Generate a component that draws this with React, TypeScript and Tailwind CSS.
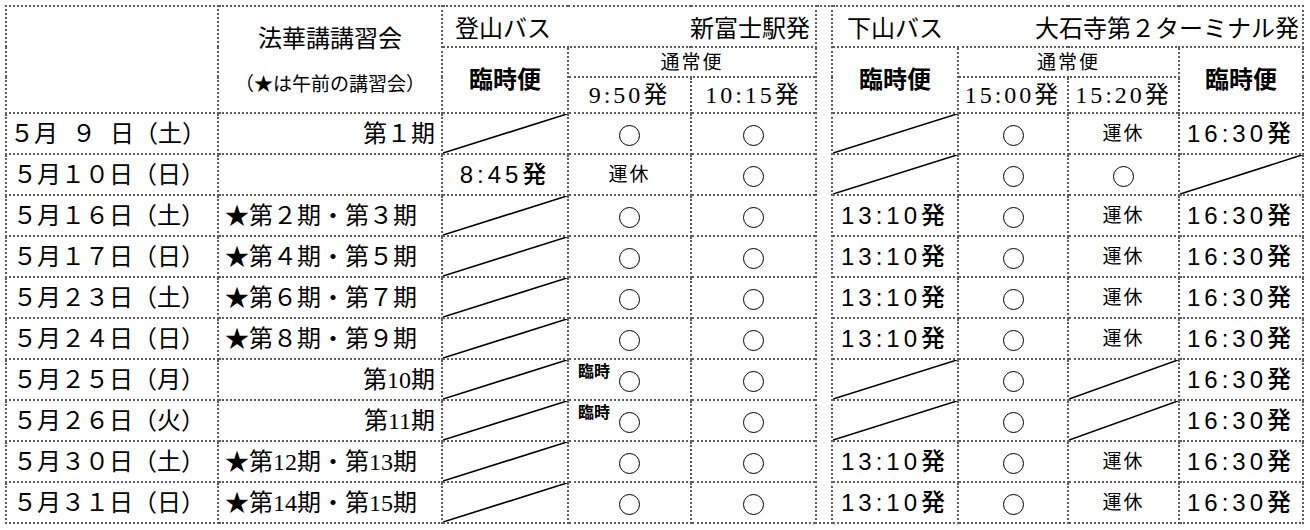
import type { ReactNode } from "react";

const B = "border-2 border-dotted border-[#5e5e5e]";
const MIN = "font-['Liberation_Serif','Noto_Sans_CJK_JP',serif]";
const GOTH = "font-['Liberation_Sans','Noto_Sans_CJK_JP',sans-serif]";

type Cell = "d" | "o" | "k" | "r" | "" | string;

interface Row {
  date: ReactNode;
  lecture: string;
  right?: boolean;
  cells: Cell[];
}

const normal = (t: string): Cell[] => ["d", "o", "o", t, "o", "k", "16:30発"];

const rows: Row[] = [
  {
    date: (
      <span className="-ml-[3px] flex whitespace-nowrap">
        <span className="shrink-0">５月</span>
        <span className="ml-[14px] shrink-0">９</span>
        <span className="ml-[14px] shrink-0">日（土）</span>
      </span>
    ),
    lecture: "第１期",
    right: true,
    cells: ["d", "o", "o", "d", "o", "k", "16:30発"],
  },
  { date: "５月１０日（日）", lecture: "", cells: ["8:45発", "k", "o", "d", "o", "o", "d"] },
  { date: "５月１６日（土）", lecture: "★第２期・第３期", cells: normal("13:10発") },
  { date: "５月１７日（日）", lecture: "★第４期・第５期", cells: normal("13:10発") },
  { date: "５月２３日（土）", lecture: "★第６期・第７期", cells: normal("13:10発") },
  { date: "５月２４日（日）", lecture: "★第８期・第９期", cells: normal("13:10発") },
  { date: "５月２５日（月）", lecture: "第10期", right: true, cells: ["d", "r", "o", "d", "o", "d", "16:30発"] },
  { date: "５月２６日（火）", lecture: "第11期", right: true, cells: ["d", "r", "o", "d", "o", "d", "16:30発"] },
  { date: "５月３０日（土）", lecture: "★第12期・第13期", cells: normal("13:10発") },
  { date: "５月３１日（日）", lecture: "★第14期・第15期", cells: normal("13:10発") },
];

function Diag() {
  return (
    <svg className="absolute inset-0 h-full w-full" viewBox="0 0 100 100" preserveAspectRatio="none">
      <line x1="0" y1="100" x2="100" y2="0" stroke="black" strokeWidth="1.6" vectorEffect="non-scaling-stroke" />
    </svg>
  );
}

function Circle() {
  return <span className="inline-block h-[21px] w-[21px] translate-y-[3px] rounded-full border-[1.5px] border-black" />;
}

function DataCell({ c }: { c: Cell }) {
  if (c === "d") {
    return (
      <td className={`${B} relative`}>
        <Diag />
      </td>
    );
  }
  if (c === "o") {
    return (
      <td className={`${B} text-center`}>
        <Circle />
      </td>
    );
  }
  if (c === "r") {
    return (
      <td className={`${B} relative text-center`}>
        <span className={`${GOTH} absolute left-[9px] top-[4px] text-[16px] font-bold leading-none`}>臨時</span>
        <Circle />
      </td>
    );
  }
  if (c === "k") {
    return (
      <td className={`${B} ${GOTH} text-center text-[19px] tracking-[2px]`}>運休</td>
    );
  }
  if (c === "") return <td className={B} />;
  return (
    <td className={`${B} ${GOTH} text-center text-[24px] font-medium tracking-[4px]`}>{c}</td>
  );
}

export default function App() {
  return (
    <div className="min-h-screen bg-white p-[5px] text-black">
      <table className={`${MIN} w-[1299px] table-fixed border-collapse leading-none`}>
        <colgroup>
          <col className="w-[212px]" />
          <col className="w-[224px]" />
          <col className="w-[126px]" />
          <col className="w-[123px]" />
          <col className="w-[125px]" />
          <col className="w-[16px]" />
          <col className="w-[126px]" />
          <col className="w-[110px]" />
          <col className="w-[111px]" />
          <col className="w-[124px]" />
        </colgroup>
        <tbody>
          <tr className="h-[41px]">
            <td rowSpan={3} className={B} />
            <td rowSpan={3} className={`${B} text-center align-top`}>
              <div className="pt-[20px] text-[24px]">法華講講習会</div>
              <div className="pt-[24px] text-[19px]">（★は午前の講習会）</div>
            </td>
            <td colSpan={3} className={`${B} pt-[4px] text-[24px]`}>
              <div className="flex justify-between pl-[12px] pr-[5px]">
                <span>登山バス</span>
                <span>新富士駅発</span>
              </div>
            </td>
            <td rowSpan={13} className={B} />
            <td colSpan={4} className={`${B} pt-[4px] text-[24px]`}>
              <div className="flex justify-between pl-[14px] pr-[3px]">
                <span>下山バス</span>
                <span>大石寺第２ターミナル発</span>
              </div>
            </td>
          </tr>
          <tr className="h-[30px]">
            <td rowSpan={2} className={`${B} ${GOTH} text-center text-[24px] font-bold`}>臨時便</td>
            <td colSpan={2} className={`${B} text-center text-[19px] tracking-[2px]`}>通常便</td>
            <td rowSpan={2} className={`${B} ${GOTH} text-center text-[24px] font-bold`}>臨時便</td>
            <td colSpan={2} className={`${B} text-center text-[19px] tracking-[2px]`}>通常便</td>
            <td rowSpan={2} className={`${B} ${GOTH} text-center text-[24px] font-bold`}>臨時便</td>
          </tr>
          <tr className="h-[36px]">
            <td className={`${B} text-center text-[24px] tracking-[3px]`}>9:50発</td>
            <td className={`${B} text-center text-[24px] tracking-[3px]`}>10:15発</td>
            <td className={`${B} text-center text-[24px] tracking-[3px]`}>15:00発</td>
            <td className={`${B} text-center text-[24px] tracking-[3px]`}>15:20発</td>
          </tr>
          {rows.map((r, i) => (
            <tr key={i} className="h-[41px]">
              <td className={`${B} pl-[6px] text-[24px]`}>{r.date}</td>
              <td className={`${B} px-[6px] text-[24px] ${r.right ? "text-right" : "text-left"}`}>{r.lecture}</td>
              {r.cells.map((c, j) => (
                <DataCell key={j} c={c} />
              ))}
            </tr>
          ))}
        </tbody>
      </table>
    </div>
  );
}
